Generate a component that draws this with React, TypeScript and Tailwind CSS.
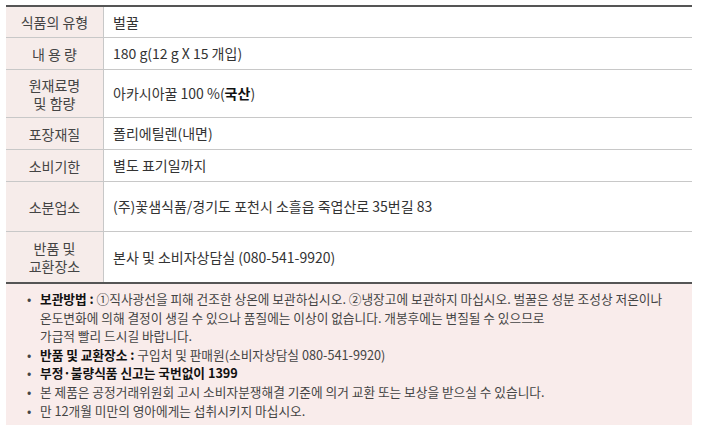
const rows: { label: React.ReactNode; value: React.ReactNode; h: string }[] = [
  { label: '식품의 유형', value: '벌꿀', h: 'h-[30px]' },
  { label: '내 용 량', value: '180 g(12 g X 15 개입)', h: 'h-[32px]' },
  {
    label: (
      <>
        원재료명
        <br />및 함량
      </>
    ),
    value: (
      <>
        아카시아꿀 100 %(<b className="font-bold text-[#111]">국산</b>)
      </>
    ),
    h: 'h-[48px]',
  },
  { label: '포장재질', value: '폴리에틸렌(내면)', h: 'h-[32px]' },
  { label: '소비기한', value: '별도 표기일까지', h: 'h-[32px]' },
  { label: '소분업소', value: '(주)꽃샘식품/경기도 포천시 소흘읍 죽엽산로 35번길 83', h: 'h-[50px]' },
  {
    label: (
      <>
        반품 및
        <br />교환장소
      </>
    ),
    value: '본사 및 소비자상담실 (080-541-9920)',
    h: 'h-[51px]',
  },
]

function Bullet({ children }: { children: React.ReactNode }) {
  return (
    <li className="flex">
      <span className="w-[13px] shrink-0">•</span>
      <span>{children}</span>
    </li>
  )
}

export default function App() {
  return (
    <div
      className="h-[434px] w-[710px] bg-white pl-[6px] pt-[5px] text-[#3a3a3a]"
      style={{ fontFamily: '"Noto Sans CJK KR", "Noto Sans", sans-serif' }}
    >
      <div className="w-[686px]">
        <div className="border-t-2 border-b-2 border-[#555]">
          {rows.map((r, i) => (
            <div key={i} className={`flex ${r.h} ${i > 0 ? 'border-t border-[#c8c8c8]' : ''}`}>
              <div className="flex w-[98px] shrink-0 items-center justify-center border-r border-[#c8c8c8] bg-[#f6ecea] text-center text-[14px] leading-[18px] text-[#444]">
                <div>{r.label}</div>
              </div>
              <div className="flex items-center pl-[9px] text-[14px] text-[#333]">{r.value}</div>
            </div>
          ))}
        </div>
        <ul className="h-[141px] bg-[#f9eceb] pl-[21px] pt-[6px] text-[12.7px] leading-[18.6px] text-[#444]">
          <Bullet>
            <b className="font-bold text-[#111]">보관방법 :</b> ①직사광선을 피해 건조한 상온에 보관하십시오. ②냉장고에 보관하지 마십시오. 벌꿀은 성분 조성상 저온이나
            <br />
            온도변화에 의해 결정이 생길 수 있으나 품질에는 이상이 없습니다. 개봉후에는 변질될 수 있으므로
            <br />
            가급적 빨리 드시길 바랍니다.
          </Bullet>
          <Bullet>
            <b className="font-bold text-[#111]">반품 및 교환장소 :</b> 구입처 및 판매원(소비자상담실 080-541-9920)
          </Bullet>
          <Bullet>
            <b className="font-bold text-[#111]">부정·불량식품 신고는 국번없이 1399</b>
          </Bullet>
          <Bullet>본 제품은 공정거래위원회 고시 소비자분쟁해결 기준에 의거 교환 또는 보상을 받으실 수 있습니다.</Bullet>
          <Bullet>만 12개월 미만의 영아에게는 섭취시키지 마십시오.</Bullet>
        </ul>
      </div>
    </div>
  )
}
